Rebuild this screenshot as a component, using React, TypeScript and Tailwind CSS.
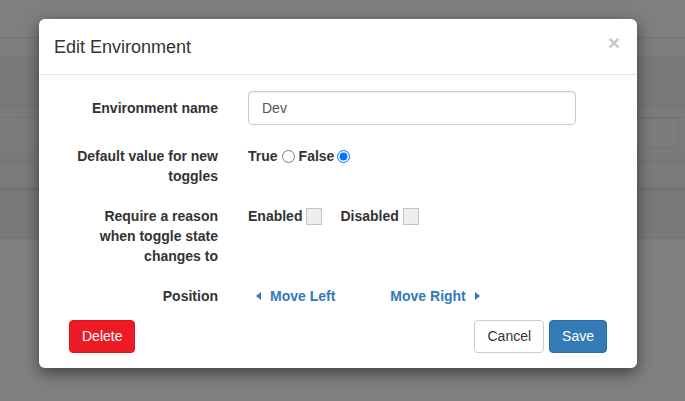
import React from "react";

function Caret({ dir }: { dir: "left" | "right" }) {
  return (
    <svg width="5" height="8" viewBox="0 0 5 8" className="fill-[#337ab7]">
      {dir === "left" ? <polygon points="5,0 5,8 0,4" /> : <polygon points="0,0 0,8 5,4" />}
    </svg>
  );
}

function Row({ label, children, className }: { label: React.ReactNode; children: React.ReactNode; className?: string }) {
  return (
    <div className={"flex " + (className ?? "")}>
      <label className="w-[164px] shrink-0 pt-[7px] text-right text-[14px] leading-[20px] font-bold text-[#333]">
        {label}
      </label>
      <div className="ml-[30px] flex-1">{children}</div>
    </div>
  );
}

export default function App() {
  return (
    <div
      className="relative h-[401px] w-full overflow-hidden bg-[#808080]"
      style={{ fontFamily: '"Liberation Sans", Arial, Helvetica, sans-serif' }}
    >
      {/* page behind the backdrop */}
      <div className="flex flex-col">
        <div className="h-[38px] border-b border-[#747474] bg-[#7f7f7f]" />
        <div className="h-[20px] border-b border-[#757575] bg-[#7e7e7e]" />
        <div className="h-[48px] border-b border-[#737373] bg-[#78797b]" />
        <div className="h-[12px] border-b border-[#747474] bg-[#7b7b7b]" />
        <div className="flex h-[31px] justify-end bg-[#7c7c7c] pr-[6px]">
          <div className="h-[30px] w-[60px] rounded-[3px] border border-[#737373]" />
        </div>
        <div className="h-[13px] border-b border-[#747474] bg-[#797a7c]" />
        <div className="h-[25px] bg-[#7b7b7b]" />
        <div className="h-[4px] bg-[#707275]" />
        <div className="h-[48px] border-b border-[#767676] bg-[#78797b]" />
      </div>

      {/* modal */}
      <div className="absolute top-[19px] left-[39px] w-[598px] rounded-[6px] bg-white shadow-[0_5px_15px_rgba(0,0,0,0.5)]">
        <div className="flex h-[56px] items-center justify-between border-b border-[#e5e5e5] px-[15px]">
          <h4 className="text-[18px] leading-[26px] text-[#333]">Edit Environment</h4>
          <button className="mr-[2px] -mt-[8px] text-[21px] leading-none font-bold text-[#c8c8c8]">×</button>
        </div>

        <div className="px-[15px] pt-[16px]">
          <div className="flex">
            <label className="flex w-[164px] shrink-0 items-center justify-end text-[14px] font-bold text-[#333]">
              Environment name
            </label>
            <input
              defaultValue="Dev"
              className="ml-[30px] h-[34px] w-[328px] rounded-[4px] border border-[#ccc] px-[13px] text-[14px] text-[#555] shadow-[inset_0_1px_1px_rgba(0,0,0,0.075)] outline-none"
            />
          </div>

          <Row className="mt-[14px] h-[47px]" label={<>Default value for new<br />toggles</>}>
            <div className="flex items-center pt-[7px] text-[14px] leading-[20px] font-bold text-[#333]">
              <span>True</span>
              <input type="radio" name="def" className="mx-[4px] h-[13px] w-[13px]" />
              <span>False</span>
              <input type="radio" name="def" defaultChecked className="mx-[3px] h-[13px] w-[13px]" />
            </div>
          </Row>

          <Row className="mt-[13px]" label={<>Require a reason<br />when toggle state<br />changes to</>}>
            <div className="flex items-center pt-[7px] text-[14px] leading-[20px] font-bold text-[#333]">
              <span>Enabled</span>
              <span className="ml-[4px] h-[17px] w-[16px] border border-[#c4c4c4] bg-[#eeeeee]" />
              <span className="ml-[18px]">Disabled</span>
              <span className="ml-[4px] h-[17px] w-[16px] border border-[#c4c4c4] bg-[#eeeeee]" />
            </div>
          </Row>

          <Row className="mt-[13px]" label="Position">
            <div className="flex items-center pt-[7px] text-[14px] leading-[20px] font-bold text-[#337ab7]">
              <span className="ml-[8px]">
                <Caret dir="left" />
              </span>
              <span className="ml-[9px]">Move Left</span>
              <span className="ml-[55px]">Move Right</span>
              <span className="ml-[9px]">
                <Caret dir="right" />
              </span>
            </div>
          </Row>
        </div>

        <div className="flex items-center justify-between px-[30px] pt-[14px] pb-[15px]">
          <button className="h-[33px] rounded-[4px] border border-[#e0141f] bg-[#ed1c24] px-[12px] text-[14px] text-white">
            Delete
          </button>
          <div className="flex gap-[5px]">
            <button className="h-[33px] rounded-[4px] border border-[#ccc] bg-white px-[12px] text-[14px] text-[#333]">
              Cancel
            </button>
            <button className="h-[33px] rounded-[4px] border border-[#2e6da4] bg-[#337ab7] px-[12px] text-[14px] text-white">
              Save
            </button>
          </div>
        </div>
      </div>
    </div>
  );
}
